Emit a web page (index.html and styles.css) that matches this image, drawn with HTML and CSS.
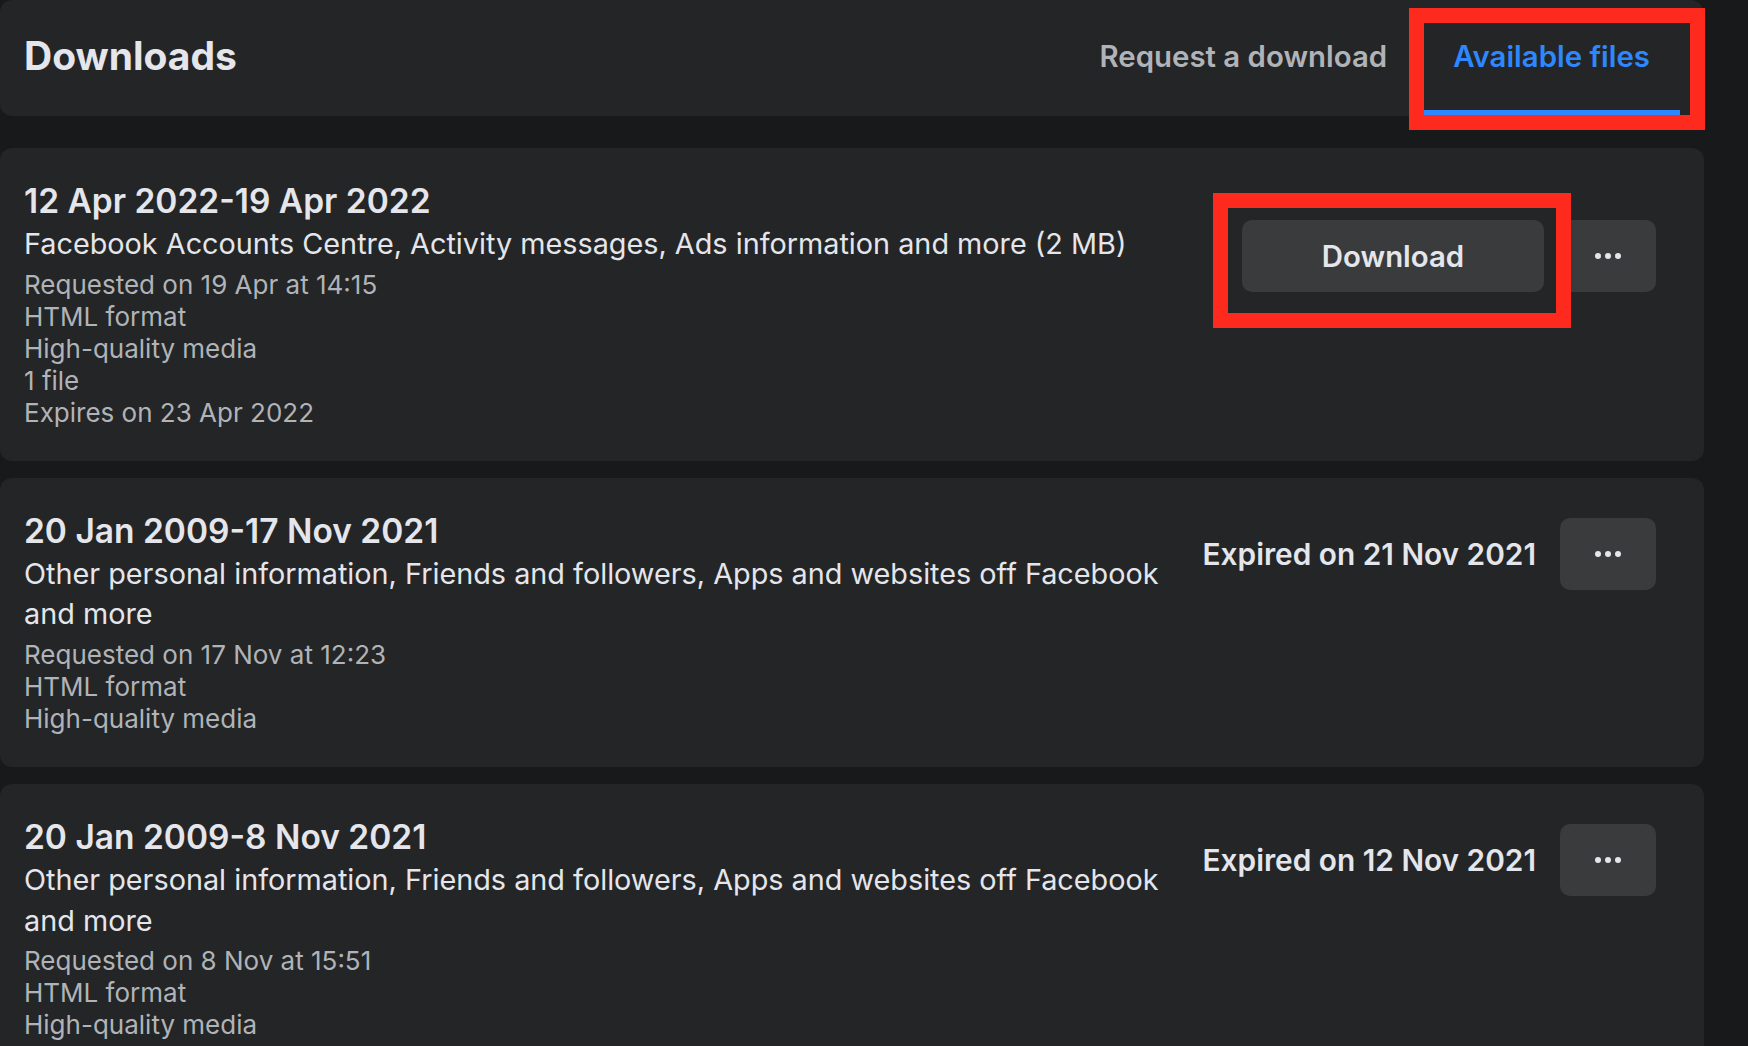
FILE: index.html
```html
<!DOCTYPE html>
<html lang="en">
<head>
<meta charset="utf-8">
<title>Downloads</title>
<link rel="stylesheet" href="styles.css">
</head>
<body>
<div class="page">
  <header class="topbar">
    <h1 class="page-title">Downloads</h1>
    <nav class="tabs">
      <a class="tab">Request a download</a>
      <a class="tab tab-active">Available files</a>
    </nav>
  </header>

  <main class="list">
    <section class="card">
      <div class="info">
        <h2 class="range">12 Apr 2022-19 Apr 2022</h2>
        <p class="desc">Facebook Accounts Centre, Activity messages, Ads information and more (2 MB)</p>
        <ul class="meta">
          <li>Requested on 19 Apr at 14:15</li>
          <li>HTML format</li>
          <li>High-quality media</li>
          <li>1 file</li>
          <li>Expires on 23 Apr 2022</li>
        </ul>
      </div>
      <div class="actions actions-low">
        <button class="btn btn-download">Download</button>
        <button class="btn btn-more" aria-label="More">
          <svg class="dots" width="26" height="6" viewBox="0 0 26 6"><circle cx="3" cy="3" r="3"/><circle cx="13" cy="3" r="3"/><circle cx="23" cy="3" r="3"/></svg>
        </button>
      </div>
    </section>

    <section class="card">
      <div class="info">
        <h2 class="range">20 Jan 2009-17 Nov 2021</h2>
        <p class="desc">Other personal information, Friends and followers, Apps and websites off Facebook and more</p>
        <ul class="meta">
          <li>Requested on 17 Nov at 12:23</li>
          <li>HTML format</li>
          <li>High-quality media</li>
        </ul>
      </div>
      <div class="actions">
        <span class="expired">Expired on 21 Nov 2021</span>
        <button class="btn btn-more" aria-label="More">
          <svg class="dots" width="26" height="6" viewBox="0 0 26 6"><circle cx="3" cy="3" r="3"/><circle cx="13" cy="3" r="3"/><circle cx="23" cy="3" r="3"/></svg>
        </button>
      </div>
    </section>

    <section class="card">
      <div class="info">
        <h2 class="range">20 Jan 2009-8 Nov 2021</h2>
        <p class="desc">Other personal information, Friends and followers, Apps and websites off Facebook and more</p>
        <ul class="meta">
          <li>Requested on 8 Nov at 15:51</li>
          <li>HTML format</li>
          <li>High-quality media</li>
        </ul>
      </div>
      <div class="actions">
        <span class="expired">Expired on 12 Nov 2021</span>
        <button class="btn btn-more" aria-label="More">
          <svg class="dots" width="26" height="6" viewBox="0 0 26 6"><circle cx="3" cy="3" r="3"/><circle cx="13" cy="3" r="3"/><circle cx="23" cy="3" r="3"/></svg>
        </button>
      </div>
    </section>
  </main>

  <div class="annotation annotation-tab"></div>
  <div class="annotation annotation-download"></div>
</div>
</body>
</html>
```

FILE: styles.css
```css
* { box-sizing: border-box; }

html, body {
  margin: 0;
  padding: 0;
  background: #18191a;
}

body {
  width: 1748px;
  height: 1046px;
  overflow: hidden;
  font-family: "Inter", "Roboto", "Liberation Sans", sans-serif;
  color: #e4e6eb;
}

.page {
  position: relative;
  width: 1748px;
  height: 1046px;
}

/* ---------- header ---------- */
.topbar {
  width: 1703px;
  height: 116px;
  padding: 0 23px 1px 24px;
  background: #242526;
  border-radius: 12px;
  display: flex;
  justify-content: space-between;
  align-items: stretch;
}

.page-title {
  margin: 0 0 4px;
  align-self: center;
  font-size: 39px;
  font-weight: 700;
  line-height: 46px;
  color: #e4e6eb;
}

.tabs {
  display: flex;
  gap: 6px;
  align-items: stretch;
}

.tab {
  display: flex;
  align-items: center;
  padding: 2px 30px 0;
  border-bottom: 5px solid transparent;
  font-size: 29.4px;
  font-weight: 600;
  color: #b0b3b8;
  white-space: nowrap;
}

.tab-active {
  color: #2d88ff;
  border-bottom-color: #2d88ff;
}

/* ---------- list ---------- */
.list {
  width: 1704px;
  margin-top: 32px;
  display: flex;
  flex-direction: column;
  gap: 17px;
}

.card {
  background: #242526;
  border-radius: 12px;
  padding: 30px 48px 32px 24px;
  display: flex;
  align-items: flex-start;
  gap: 24px;
}

.info {
  flex: 1;
  min-width: 0;
}

.range {
  margin: 0;
  font-size: 33.5px;
  font-weight: 600;
  line-height: 46px;
  color: #e4e6eb;
}

.desc {
  margin: 0;
  font-size: 28.8px;
  font-weight: 400;
  line-height: 40.5px;
  color: #e4e6eb;
}

.meta {
  list-style: none;
  margin: 4px 0 0;
  padding: 0;
  font-size: 26px;
  line-height: 32.1px;
  color: #b0b3b8;
}

/* ---------- actions ---------- */
.actions {
  flex: none;
  display: flex;
  align-items: center;
  gap: 16px;
  margin-top: 10px;
}

.actions-low {
  margin-top: 42px;
}

.expired {
  font-size: 29.8px;
  font-weight: 600;
  color: #e4e6eb;
  white-space: nowrap;
  margin-right: 8px;
}

.btn {
  height: 72px;
  border: 0;
  border-radius: 10px;
  background: #3a3b3c;
  color: #e4e6eb;
  font-family: inherit;
  display: flex;
  align-items: center;
  justify-content: center;
  padding: 0;
}

.btn-download {
  width: 302px;
  font-size: 29.4px;
  font-weight: 600;
}

.btn-more {
  width: 96px;
}

.dots {
  display: block;
  fill: #e4e6eb;
}

/* ---------- red annotation boxes ---------- */
.annotation {
  position: absolute;
  border: 15px solid #fe2a1e;
}

.annotation-tab {
  left: 1409px;
  top: 8px;
  width: 296px;
  height: 122px;
}

.annotation-download {
  left: 1213px;
  top: 193px;
  width: 358px;
  height: 135px;
}
```
